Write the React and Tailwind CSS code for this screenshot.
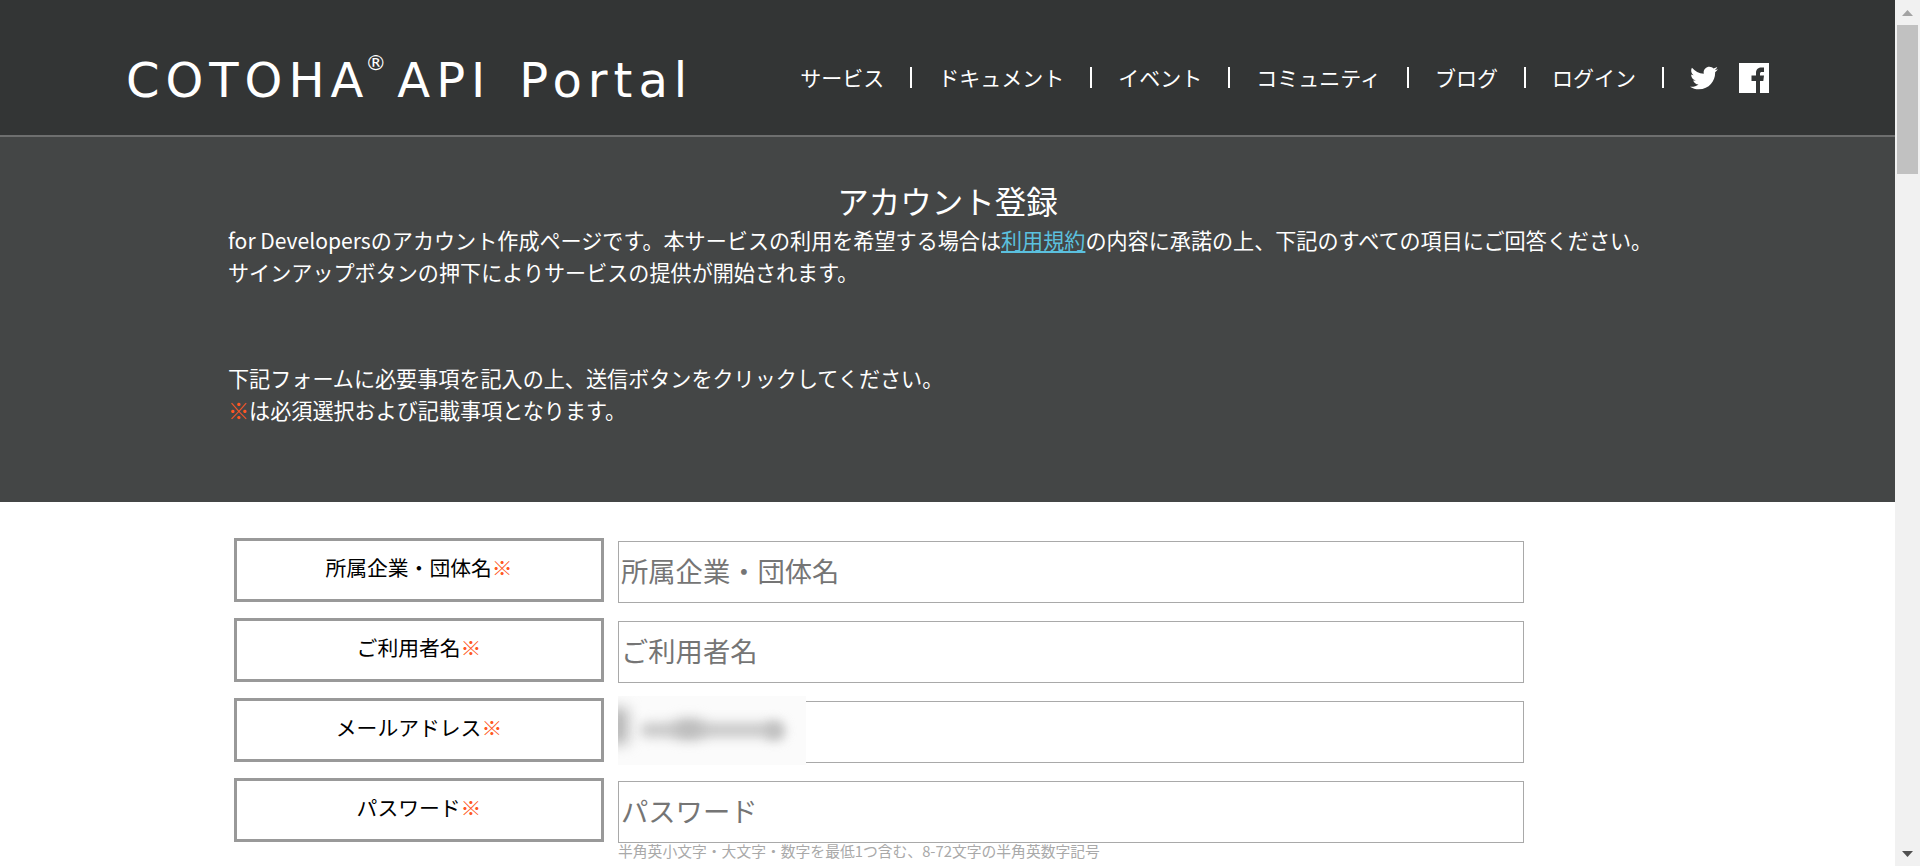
import { FaTwitter } from "react-icons/fa";

const JP = "[font-family:'Noto_Sans_CJK_JP','Noto_Sans',sans-serif]";

const navItems = ["サービス", "ドキュメント", "イベント", "コミュニティ", "ブログ", "ログイン"];

const Required = () => <span className="text-[#ff5722]">※</span>;

const FacebookIcon = () => (
  <svg className="ml-[21px] h-[30px] w-[30px]" viewBox="0 0 30 30">
    <rect width="30" height="30" fill="#ffffff" />
    <path
      d="M17 30V18h-4.5v-5.5H17V10c0-4 2.5-5.5 5.5-5.5H25V9h-2c-1.500 0-2 .5-2 2v1.500h4l-.7 5.500H21v12z"
      fill="#333535"
    />
  </svg>
);

const Header = () => (
  <header className="flex h-[137px] shrink-0 items-center justify-between border-b-2 border-[#6e6f6f] bg-[#333535] pl-[126px] pr-[126px] pt-[20px] text-white">
    <div className="flex items-start pt-[4px] font-['DejaVu_Sans',sans-serif] text-[48px] leading-none tracking-[6px]">
      <span>COTOHA</span>
      <span className="ml-[-4px] mt-[-3px] text-[21px] tracking-normal">®</span>
      <span className="ml-[11px]">API</span>
      <span className="ml-[28px]">Portal</span>
    </div>
    <nav className="flex items-center text-[21px] leading-none">
      {navItems.map((item) => (
        <div key={item} className="flex items-center">
          <a className="whitespace-nowrap">{item}</a>
          <span className="mx-[26px] h-[21px] w-[2px] bg-white" />
        </div>
      ))}
      <FaTwitter className="h-[28px] w-[28px]" />
      <FacebookIcon />
    </nav>
  </header>
);

const Hero = () => (
  <section className="h-[365px] shrink-0 bg-[#444646] px-[228px] pt-[42px] text-[21.1px] leading-[31.5px] text-white">
    <h1 className="mb-[4px] text-center text-[31.5px] font-normal leading-[42px]">アカウント登録</h1>
    <p className="whitespace-nowrap">
      for Developersのアカウント作成ページです。本サービスの利用を希望する場合は
      <a className="text-[#5bc0de] underline">利用規約</a>
      の内容に承諾の上、下記のすべての項目にご回答ください。
    </p>
    <p>サインアップボタンの押下によりサービスの提供が開始されます。</p>
    <p className="mt-[75px]">下記フォームに必要事項を記入の上、送信ボタンをクリックしてください。</p>
    <p>
      <Required />
      は必須選択および記載事項となります。
    </p>
  </section>
);

const Field = ({ label, placeholder, hint, blurred }) => (
  <div className="flex items-start">
    <label className="flex h-[64px] w-[370px] shrink-0 items-center justify-center border-[3px] border-[#999999] pb-[5px] text-[20.8px] text-black">
      {label}
      <Required />
    </label>
    <div className="relative ml-[14px] mt-[3px] w-[906px]">
      <input
        placeholder={placeholder}
        className="h-[61.5px] w-full border border-[#a9a9a9] bg-white pb-[3px] pl-[2px] text-[27.3px] outline-none placeholder:text-[#757575]"
      />
      {hint && (
        <p className="mt-[-1px] text-[14.8px] leading-[18px] text-[#a9a9a9]">{hint}</p>
      )}
      {blurred && (
        <div className="absolute left-0 top-[-5px] h-[68.5px] w-[188px] overflow-hidden bg-[#fbfbfb]">
          <div className="absolute left-[-10px] top-[12px] h-[36px] w-[20px] bg-[#b4b4b4] blur-[7px]" />
          <div className="absolute left-[22px] top-[27px] h-[14px] w-[142px] rounded-full bg-[#c6c6c6] blur-[6px]" />
          <div className="absolute left-[56px] top-[24px] h-[18px] w-[30px] rounded-full bg-[#bbbbbb] blur-[7px]" />
          <div className="absolute left-[148px] top-[26px] h-[18px] w-[18px] rounded-full bg-[#bdbdbd] blur-[6px]" />
        </div>
      )}
    </div>
  </div>
);

const Scrollbar = () => (
  <div className="flex h-full w-[25px] shrink-0 flex-col items-center bg-[#f1f1f1]">
    <svg className="mt-[10px] h-[6px] w-[11px]" viewBox="0 0 11 6">
      <path d="M5.500 0 11 6H0z" fill="#a3a3a3" />
    </svg>
    <div className="mt-[9px] h-[149px] w-[21px] bg-[#c1c1c1]" />
    <svg className="mb-[9px] mt-auto h-[6px] w-[11px]" viewBox="0 0 11 6">
      <path d="M0 0h11L5.500 6z" fill="#505050" />
    </svg>
  </div>
);

export default function App() {
  return (
    <div className={`flex h-[866px] overflow-hidden bg-white ${JP}`}>
      <main className="flex min-w-0 flex-1 flex-col">
        <Header />
        <Hero />
        <form className="flex flex-col gap-y-[15.5px] pl-[234px] pt-[36px]">
          <Field label="所属企業・団体名" placeholder="所属企業・団体名" />
          <Field label="ご利用者名" placeholder="ご利用者名" />
          <Field label="メールアドレス" blurred />
          <Field
            label="パスワード"
            placeholder="パスワード"
            hint="半角英小文字・大文字・数字を最低1つ含む、8-72文字の半角英数字記号"
          />
        </form>
      </main>
      <Scrollbar />
    </div>
  );
}
